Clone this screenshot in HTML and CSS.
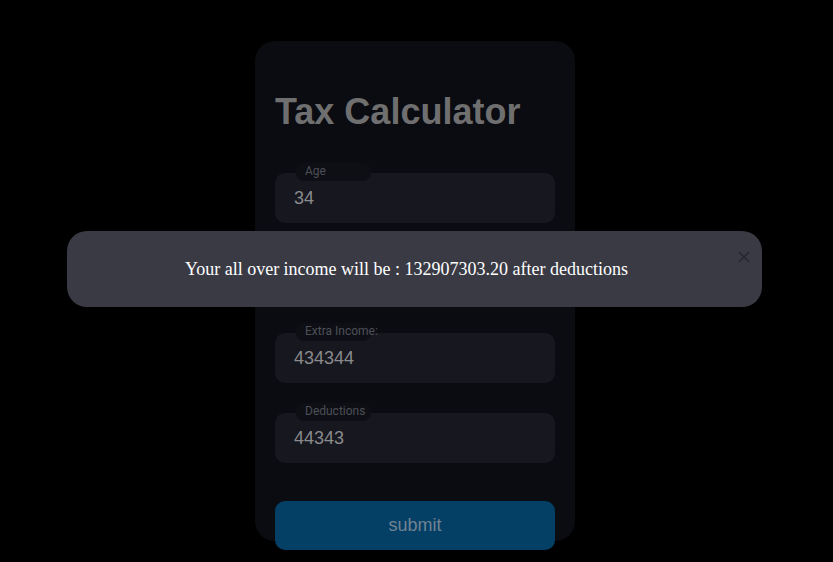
FILE: index.html
```html
<!DOCTYPE html>
<html>
<head>
<meta charset="utf-8">
<link rel="stylesheet" href="styles.css">
</head>
<body>
<main class="page">
  <form class="card">
    <h1 class="title">Tax Calculator</h1>
    <div class="field">
      <span class="tag">Age</span>
      <div class="input">34</div>
    </div>
    <div class="field">
      <span class="tag">Income</span>
      <div class="input">13243434</div>
    </div>
    <div class="field">
      <span class="tag">Extra Income:</span>
      <div class="input">434344</div>
    </div>
    <div class="field">
      <span class="tag">Deductions</span>
      <div class="input">44343</div>
    </div>
    <button type="button" class="submit">submit</button>
  </form>
</main>
<div class="modal">
  <p class="modal-text">Your all over income will be : 132907303.20 after deductions</p>
  <span class="close" aria-label="close">
    <svg width="12" height="12" viewBox="0 0 12 12"><path d="M1 1 L11 11 M11 1 L1 11" stroke="#25262e" stroke-width="1.6" fill="none"/></svg>
  </span>
</div>
</body>
</html>
```
FILE: styles.css
```css
html, body {
  margin: 0;
  padding: 0;
  background: #000;
  height: 100%;
  overflow: hidden;
}
.page {
  display: flex;
  justify-content: center;
  padding-top: 41px;
  padding-right: 3px;
}
.card {
  box-sizing: border-box;
  width: 320px;
  height: 500px;
  background: #0b0c12;
  border-radius: 20px;
  padding: 20px 20px 0;
  font-family: "Liberation Sans", Arial, sans-serif;
}
.title {
  margin: 30px 0 0;
  font-size: 36px;
  font-weight: 700;
  line-height: 41px;
  color: #6f6f70;
}
.field {
  display: flex;
  flex-direction: column;
  align-items: flex-start;
  margin-top: 31px;
}
.field + .field {
  margin-top: 20px;
}
.tag {
  position: relative;
  z-index: 1;
  box-sizing: border-box;
  width: 75px;
  height: 18px;
  margin: 0 0 -8px 21px;
  padding: 1px 0 0 9px;
  background: #0e0f15;
  border-radius: 8px;
  font-family: Roboto, "Liberation Sans", sans-serif;
  font-size: 12px;
  line-height: 14px;
  color: #4d4f57;
  white-space: nowrap;
}
.input {
  box-sizing: border-box;
  width: 280px;
  height: 50px;
  background: #17171f;
  border-radius: 10px;
  padding: 0 19px;
  display: flex;
  align-items: center;
  font-size: 18px;
  color: #8a8a8c;
}
.submit {
  display: block;
  width: 280px;
  height: 49px;
  margin-top: 38px;
  border: none;
  border-radius: 10px;
  background: #043f65;
  color: #718393;
  font-family: "Liberation Sans", Arial, sans-serif;
  font-size: 18px;
}
.modal {
  position: absolute;
  z-index: 10;
  left: 67px;
  top: 231px;
  box-sizing: border-box;
  width: 695px;
  height: 76px;
  padding-right: 16px;
  background: #393a44;
  border-radius: 20px;
  display: flex;
  align-items: center;
  justify-content: center;
}
.modal-text {
  margin: 0;
  font-family: "Liberation Serif", "Times New Roman", serif;
  font-size: 18px;
  color: #ffffff;
}
.close {
  position: absolute;
  right: 12px;
  top: 20px;
  width: 12px;
  height: 12px;
  display: block;
}
.close svg { display: block; }
```
